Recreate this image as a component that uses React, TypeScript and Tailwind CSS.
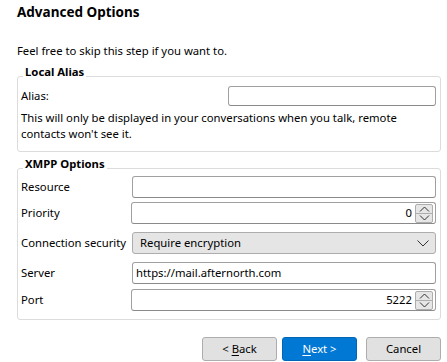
import React from "react";

function Spinner() {
  return (
    <div className="w-[18px] h-[19px] mr-[2px] flex flex-col border border-[#adadad] rounded-[2px] bg-[#e6e6e6]">
      <div className="flex-1 flex items-center justify-center border-b border-[#adadad]">
        <svg width="11" height="6" viewBox="0 0 11 6" fill="none">
          <path d="M1 5.5 L5.5 1 L10 5.5" stroke="#333" strokeWidth="1" />
        </svg>
      </div>
      <div className="flex-1 flex items-center justify-center">
        <svg width="11" height="6" viewBox="0 0 11 6" fill="none">
          <path d="M1 0.5 L5.5 5 L10 0.5" stroke="#333" strokeWidth="1" />
        </svg>
      </div>
    </div>
  );
}

function Row({ label, children, className = "" }: { label: string; children: React.ReactNode; className?: string }) {
  return (
    <div className={"flex items-center " + className}>
      <span className="w-[111px] pl-[3px] shrink-0 whitespace-nowrap">{label}</span>
      {children}
    </div>
  );
}

const inputCls =
  "h-[22px] border border-[#a0a0a0] border-b-[#8a8a8a] rounded-[3px] bg-white flex items-center";

export default function App() {
  return (
    <div
      className="w-[447px] h-[362px] bg-white text-black text-[11.3px] leading-[16px] pl-[17px] pr-[6px] overflow-hidden"
      style={{ fontFamily: '"Noto Sans", sans-serif' }}
    >
      <h1 className="pt-[2px] text-[13.5px] leading-[20px] font-bold">Advanced Options</h1>

      <p className="mt-[21px]">Feel free to skip this step if you want to.</p>

      {/* Local Alias */}
      <div className="mt-[17px] border border-[#dcdcdc] rounded-[3px] pb-[9px]">
        <div className="-mt-[13px] ml-[5px] px-[2px] w-fit bg-white font-bold">Local Alias</div>
        <div className="mt-[6px] flex items-center h-[20px] pl-[3px] pr-[4px]">
          <span>Alias:</span>
          <div className="ml-auto w-[208px] h-[20px] border border-[#a0a0a0] border-b-[#8a8a8a] rounded-[3px]" />
        </div>
        <p className="mt-[4px] pl-[3px]">
          This will only be displayed in your conversations when you talk, remote
          <br />
          contacts won't see it.
        </p>
      </div>

      {/* XMPP Options */}
      <div className="mt-[16px] border border-[#dcdcdc] rounded-[3px] pb-[8px] pr-[4px]">
        <div className="-mt-[13px] ml-[5px] px-[2px] w-fit bg-white font-bold">XMPP Options</div>

        <Row label="Resource" className="mt-[4px]">
          <div className={inputCls + " flex-1 ml-[3px]"} />
        </Row>

        <Row label="Priority" className="mt-[4px]">
          <div className={inputCls + " flex-1 ml-[2px] justify-end"}>
            <span className="mr-[3px]">0</span>
            <Spinner />
          </div>
        </Row>

        <Row label="Connection security" className="mt-[8px]">
          <div className="h-[22px] flex-1 ml-[3px] flex items-center border border-[#adadad] rounded-[3px] bg-[#e5e5e5] pl-[7px] pr-[6px]">
            <span>Require encryption</span>
            <svg className="ml-auto" width="12" height="7" viewBox="0 0 12 7" fill="none">
              <path d="M0.5 0.5 L6 6 L11.5 0.5" stroke="#333" strokeWidth="1" />
            </svg>
          </div>
        </Row>

        <Row label="Server" className="mt-[8px]">
          <div className={inputCls + " h-[21px] flex-1 ml-[3px] pl-[3px]"}>
            <span>https://mail.afternorth.com</span>
          </div>
        </Row>

        <Row label="Port" className="mt-[5px]">
          <div className={inputCls + " flex-1 ml-[2px] justify-end"}>
            <span className="mr-[3px]">5222</span>
            <Spinner />
          </div>
        </Row>
      </div>

      {/* Buttons */}
      <div className="mt-[17px] flex justify-end">
        <button className="w-[75px] h-[24px] border border-[#adadad] rounded-[3px] bg-[#e1e1e1]">
          &lt; <span className="underline underline-offset-2">B</span>ack
        </button>
        <button className="ml-[5px] w-[75px] h-[24px] border border-[#0067b8] rounded-[3px] bg-[#0078d4] text-white">
          <span className="underline underline-offset-2">N</span>ext &gt;
        </button>
        <button className="ml-[9px] w-[75px] h-[24px] border border-[#adadad] rounded-[3px] bg-[#e1e1e1]">
          Cancel
        </button>
      </div>
    </div>
  );
}
